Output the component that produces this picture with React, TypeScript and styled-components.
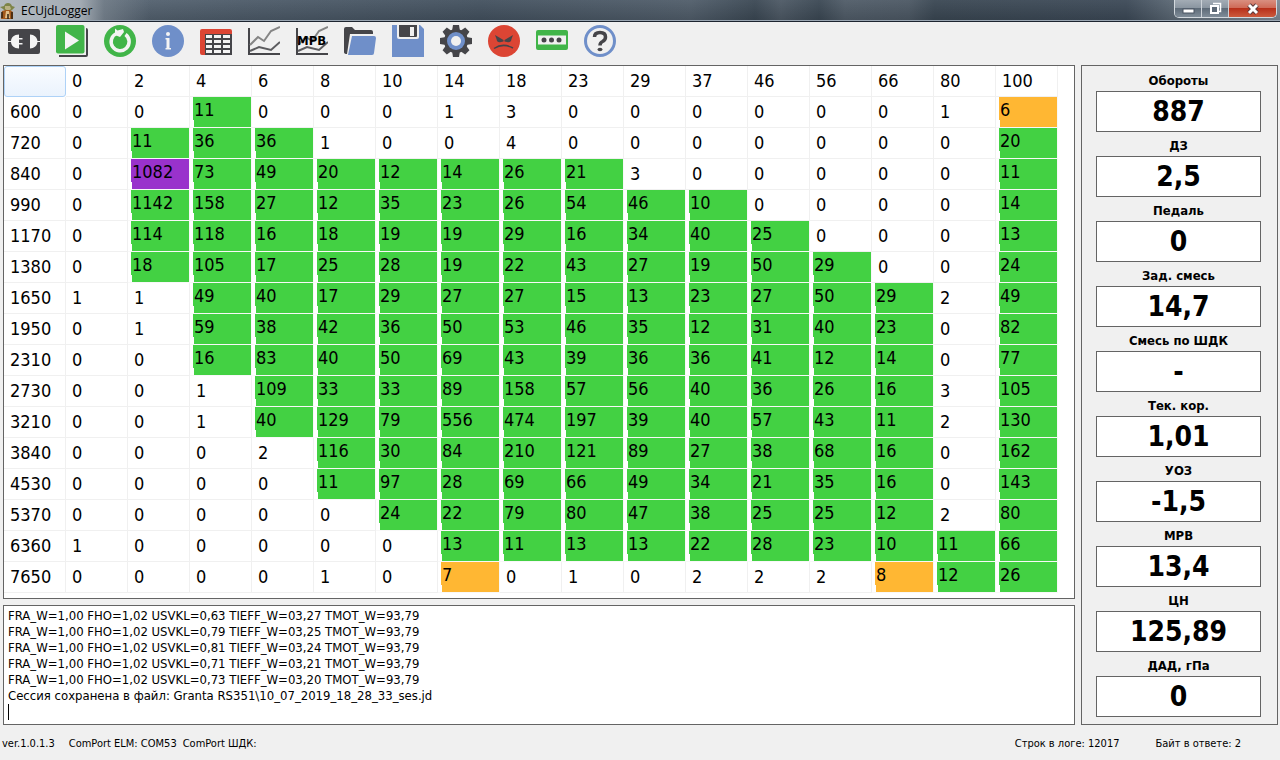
import React from "react";
import styled, { createGlobalStyle, css } from "styled-components";

const Global = createGlobalStyle`
  * { box-sizing: border-box; }
  html, body, #root { height: 100%; }
  body {
    margin: 0;
    background: #f0f0f0;
    color: #000;
    font-family: "DejaVu Sans Condensed", "DejaVu Sans", sans-serif;
    font-size: 11px;
  }
`;

const Window = styled.div`
  display: flex;
  flex-direction: column;
  min-height: 100%;
`;

const TitleBar = styled.header`
  display: flex;
  align-items: flex-start;
  justify-content: space-between;
  height: 22px;
  padding-right: 3px;
  border-bottom: 1px solid #1d2530;
  box-shadow: inset 0 -1px 0 #9aa6b2;
  background:
    linear-gradient(90deg, #b4bbc2 0, #a3abb3 80px, rgba(128, 138, 148, 0.6) 104px, rgba(80, 92, 104, 0) 150px),
    linear-gradient(rgba(255, 255, 255, 0.05), rgba(0, 0, 0, 0.12)),
    linear-gradient(90deg, #5c6a78 0, #4d5b69 240px, #43515f 480px, #505d6a 54%, #3b4854 59%, #4d5965 61%, #3b4854 64%, #505c68 66%, #4c5864 71%, #3a4753 73%, #3c4957 88%, #66737f 93%, #7d8a96 100%);
`;

const Caption = styled.div`
  display: flex;
  align-items: center;
  gap: 6px;
  height: 21px;
  font-family: "Open Sans", sans-serif;
  font-size: 12px;
`;

const WindowButtons = styled.div`
  display: flex;
  height: 18px;
  border: 1px solid #d3d9de;
  border-top: 0;
  border-radius: 0 0 5px 5px;
  overflow: hidden;
`;

const WindowButton = styled.button<{ $close?: boolean }>`
  display: flex;
  align-items: center;
  justify-content: center;
  width: ${(p) => (p.$close ? 47 : 27)}px;
  padding: 0;
  border: 0;
  border-right: ${(p) => (p.$close ? "0" : "1px solid #cdd3d9")};
  background: ${(p) =>
    p.$close
      ? "linear-gradient(#d98f80 0, #cf6b58 45%, #b8301a 50%, #cc5a3c 100%)"
      : "linear-gradient(#a3acb5 0, #8b96a1 45%, #5e6b78 50%, #7f8c98 100%)"};
`;

const Toolbar = styled.nav`
  display: flex;
  gap: 16px;
  height: 43px;
  padding: 3px 8px;
`;

const ToolButton = styled.button`
  width: 32px;
  height: 32px;
  padding: 0;
  border: 0;
  background: none;
  svg { display: block; }
`;

const Workspace = styled.main`
  display: flex;
  gap: 6px;
  padding: 0 2px 0 3px;
`;

const LeftColumn = styled.div`
  display: flex;
  flex: 1;
  flex-direction: column;
  gap: 6px;
  min-width: 0;
`;

const Frame = styled.section`
  border: 1px solid #646464;
  background: #fff;
`;

const GridFrame = styled(Frame)`
  height: 534px;
`;

const Grid = styled.table`
  width: 1054px;
  border-collapse: separate;
  border-spacing: 0;
  table-layout: fixed;
  font-size: 18px;
`;

const cell = css`
  height: 31px;
  padding: 0 0 0 6px;
  border: 0 solid #f0f0f0;
  border-width: 0 1px 1px 0;
  font-weight: normal;
  line-height: 30px;
  text-align: left;
`;

const HeadCell = styled.th`${cell}`;

const CornerCell = styled.td`
  ${cell}
  padding: 0;
  border: 1px solid #aed2f7;
  border-radius: 3px;
  background: linear-gradient(#f9fcff, #ebf3fd);
`;

const fills = { green: "#43d143", orange: "#ffb733", purple: "#9932cc" };
type Fill = keyof typeof fills;

const DataCell = styled.td<{ $fill?: Fill }>`
  ${cell}
  ${(p) =>
    p.$fill &&
    css`
      padding-left: 3px;
      border-color: #f8f8f8;
    `}
`;

const Mark = styled.div<{ $fill: Fill }>`
  height: 30px;
  padding-left: 1px;
  line-height: 26px;
  background:
    linear-gradient(#fff, #fff) 0 100% / 1px 7px no-repeat,
    ${(p) => fills[p.$fill]};
`;

const LogFrame = styled(Frame)`
  height: 120px;
  padding: 2px 4px;
`;

const LogText = styled.textarea`
  display: block;
  width: 100%;
  height: 96px;
  padding: 0;
  border: 0;
  outline: 0;
  resize: none;
  overflow: hidden;
  background: none;
  color: #000;
  font: inherit;
  font-size: 13px;
  line-height: 16px;
`;

const Caret = styled.div`
  width: 1px;
  height: 16px;
  background: #000;
`;

const Gauges = styled.aside`
  display: flex;
  flex-direction: column;
  width: 197px;
  padding: 3px 16px 0 14px;
  border: 1px solid #646464;
`;

const Gauge = styled.div`
  display: flex;
  flex-direction: column;
  height: 65px;
`;

const GaugeLabel = styled.label`
  height: 22px;
  font-size: 13px;
  font-weight: bold;
  line-height: 24px;
  text-align: center;
`;

const GaugeValue = styled.input`
  width: 100%;
  height: 41px;
  padding: 0;
  border: 1px solid #646464;
  border-radius: 0;
  background: #fff;
  color: #000;
  font: inherit;
  font-size: 28px;
  font-weight: bold;
  text-align: center;
`;

const StatusBar = styled.footer`
  display: flex;
  justify-content: space-between;
  padding: 11px 39px 0 2px;
  line-height: 16px;
`;

const StatusGroup = styled.div<{ $gap: number }>`
  display: flex;
  gap: ${(p) => p.$gap}px;
`;

const Version = styled.span`
  margin-right: 8px;
`;

const DARK = "#454549";
const BLUE = "#6f8fc9";
const GREEN = "#41b549";
const RED = "#dc4534";

const ChartLines = () => (
  <>
    <path d="M1 3v26h31" fill="none" stroke={DARK} strokeWidth="2" />
    <path d="M2 20l8-8 6 4 7-10 9-4" fill="none" stroke="#858585" strokeWidth="2" />
    <path d="M2 26l9-4 12 3 9-8" fill="none" stroke="#5c5c5f" strokeWidth="2" />
  </>
);

const tools: { name: string; art: React.ReactNode }[] = [
  {
    name: "Подключение",
    art: (
      <>
        <rect x="0" y="4" width="32" height="25" rx="2" fill={DARK} />
        <path d="M11 9.500v14c-5 0-8-3-8-7s3-7 8-7zM11 13h3.500v1.500H11zM11 18h3.500v1.500H11zM22 9.500c4 0 7.500 3 7.500 7s-3.500 7-7.500 7z" fill="#f4f4f4" />
        <path d="M0 16.500h4M29 16.500h3" stroke="#f4f4f4" />
      </>
    ),
  },
  {
    name: "Старт",
    art: (
      <>
        <path d="M30 3v27H3v2h27q2 0 2-2V5q0-2-2-2z" fill={DARK} />
        <rect width="28.500" height="28.500" rx="2" fill={GREEN} />
        <path d="M9 6.500v18l14-9z" fill="#f4f4f4" />
      </>
    ),
  },
  {
    name: "Обновить",
    art: (
      <>
        <circle cx="16" cy="16" r="16" fill={GREEN} />
        <path d="M21.500 9.500A9 9 0 1 1 12.500 8.500" fill="none" stroke="#f4f4f4" strokeWidth="3.500" />
        <path d="M11 3.500l2.500 2L19 4l1 3-4 5-5-2z" fill="#f4f4f4" />
      </>
    ),
  },
  {
    name: "Информация",
    art: (
      <>
        <circle cx="16" cy="16" r="16" fill={BLUE} />
        <circle cx="16" cy="9" r="2" fill="#f4f4f4" />
        <path d="M13.500 13h4v10h1.500v1.500h-5.500V23h1v-8.500h-1z" fill="#f4f4f4" />
      </>
    ),
  },
  {
    name: "Таблица",
    art: (
      <>
        <path d="M0 6q0-2 2-2h28q2 0 2 2v3H5v21H2q-2 0-2-2z" fill={RED} />
        <path d="M5 9h27v21H5z" fill={DARK} />
        <path d="M6 10h6v3H6zM14 10h7v3h-7zM23 10h7v3h-7zM6 15h6v3H6zM14 15h7v3h-7zM23 15h7v3h-7zM6 20h6v3H6zM14 20h7v3h-7zM23 20h7v3h-7zM6 25h6v3H6zM14 25h7v3h-7zM23 25h7v3h-7z" fill="#f4f4f4" />
      </>
    ),
  },
  { name: "График", art: <ChartLines /> },
  {
    name: "График МРВ",
    art: (
      <>
        <ChartLines />
        <text x="1" y="20" fontSize="13" fontWeight="bold" fontFamily="DejaVu Sans Condensed, sans-serif">MPB</text>
      </>
    ),
  },
  {
    name: "Открыть",
    art: (
      <>
        <path d="M0 27V4q0-2 2-2h6l3 3h16q2 0 2 2v2H6L3 29q-3 0-3-2z" fill={DARK} />
        <path d="M8 11h22q2 0 2 2l-2 15q0 2-2 2H4z" fill={BLUE} />
      </>
    ),
  },
  {
    name: "Сохранить",
    art: (
      <>
        <path d="M0 0h28l4 4v28H0z" fill={BLUE} />
        <path d="M5 0h22v12q0 2-2 2H7q-2 0-2-2z" fill="#f0f0f0" />
        <path d="M7 0h18v11q0 1-1 1H8q-1 0-1-1z" fill={DARK} />
        <path d="M18 2h4v9h-4z" fill="#f0f0f0" />
      </>
    ),
  },
  {
    name: "Настройки",
    art: (
      <>
        <g fill={DARK}>
          <circle cx="16" cy="16" r="12" />
          {[0, 45, 90, 135].map((a) => (
            <path key={a} d="M13 0h6l1 6v20l-1 6h-6l-1-6V6z" transform={`rotate(${a} 16 16)`} />
          ))}
        </g>
        <circle cx="16" cy="16" r="9" fill={BLUE} />
        <circle cx="16" cy="16" r="5" fill="#f0f0f0" />
      </>
    ),
  },
  {
    name: "Ошибки",
    art: (
      <>
        <circle cx="16" cy="16" r="16" fill={RED} />
        <path d="M7 10l8.500 5v1.500L13 17q-4 1-4.500-3zM25 10l-8.500 5v1.500l2.500.5q4 1 4.500-3z" fill={DARK} />
        <path d="M6 23.500q9-6 19-.5" fill="none" stroke={DARK} strokeWidth="1.500" />
      </>
    ),
  },
  {
    name: "Терминал",
    art: (
      <>
        <rect y="5" width="32" height="20" rx="2" fill={GREEN} />
        <path d="M2 10.500h28v9H2z" fill="#f0f0f0" />
        <g fill={DARK}>
          <circle cx="8" cy="15" r="2.500" />
          <circle cx="15.500" cy="15" r="2.500" />
          <circle cx="23" cy="15" r="2.500" />
        </g>
      </>
    ),
  },
  {
    name: "Справка",
    art: (
      <>
        <circle cx="16" cy="16" r="14.500" fill="#f0f0f0" stroke={BLUE} strokeWidth="3" />
        <path d="M10.500 12q0-4.500 5.500-4.500t5.500 4.500q0 3-3 4.500-2.500 1-2.500 4" fill="none" stroke={DARK} strokeWidth="3.500" />
        <ellipse cx="16" cy="24.500" rx="2.500" ry="1.800" fill={DARK} />
      </>
    ),
  },
];

const columns = [0, 2, 4, 6, 8, 10, 14, 18, 23, 29, 37, 46, 56, 66, 80, 100];

const rows: [number, string][] = [
  [600, "0 0 11g 0 0 0 1 3 0 0 0 0 0 0 1 6o"],
  [720, "0 11g 36g 36g 1 0 0 4 0 0 0 0 0 0 0 20g"],
  [840, "0 1082p 73g 49g 20g 12g 14g 26g 21g 3 0 0 0 0 0 11g"],
  [990, "0 1142g 158g 27g 12g 35g 23g 26g 54g 46g 10g 0 0 0 0 14g"],
  [1170, "0 114g 118g 16g 18g 19g 19g 29g 16g 34g 40g 25g 0 0 0 13g"],
  [1380, "0 18g 105g 17g 25g 28g 19g 22g 43g 27g 19g 50g 29g 0 0 24g"],
  [1650, "1 1 49g 40g 17g 29g 27g 27g 15g 13g 23g 27g 50g 29g 2 49g"],
  [1950, "0 1 59g 38g 42g 36g 50g 53g 46g 35g 12g 31g 40g 23g 0 82g"],
  [2310, "0 0 16g 83g 40g 50g 69g 43g 39g 36g 36g 41g 12g 14g 0 77g"],
  [2730, "0 0 1 109g 33g 33g 89g 158g 57g 56g 40g 36g 26g 16g 3 105g"],
  [3210, "0 0 1 40g 129g 79g 556g 474g 197g 39g 40g 57g 43g 11g 2 130g"],
  [3840, "0 0 0 2 116g 30g 84g 210g 121g 89g 27g 38g 68g 16g 0 162g"],
  [4530, "0 0 0 0 11g 97g 28g 69g 66g 49g 34g 21g 35g 16g 0 143g"],
  [5370, "0 0 0 0 0 24g 22g 79g 80g 47g 38g 25g 25g 12g 2 80g"],
  [6360, "1 0 0 0 0 0 13g 11g 13g 13g 22g 28g 23g 10g 11g 66g"],
  [7650, "0 0 0 0 1 0 7o 0 1 0 2 2 2 8o 12g 26g"],
];

const fillCodes: Record<string, Fill> = { g: "green", o: "orange", p: "purple" };

const gauges = [
  ["Обороты", "887"],
  ["ДЗ", "2,5"],
  ["Педаль", "0"],
  ["Зад. смесь", "14,7"],
  ["Смесь по ШДК", "-"],
  ["Тек. кор.", "1,01"],
  ["УОЗ", "-1,5"],
  ["МРВ", "13,4"],
  ["ЦН", "125,89"],
  ["ДАД, гПа", "0"],
];

const logLines = [
  "FRA_W=1,00 FHO=1,02 USVKL=0,63 TIEFF_W=03,27 TMOT_W=93,79",
  "FRA_W=1,00 FHO=1,02 USVKL=0,79 TIEFF_W=03,25 TMOT_W=93,79",
  "FRA_W=1,00 FHO=1,02 USVKL=0,81 TIEFF_W=03,24 TMOT_W=93,79",
  "FRA_W=1,00 FHO=1,02 USVKL=0,71 TIEFF_W=03,21 TMOT_W=93,79",
  "FRA_W=1,00 FHO=1,02 USVKL=0,73 TIEFF_W=03,20 TMOT_W=93,79",
  "Сессия сохранена в файл: Granta RS351\\10_07_2019_18_28_33_ses.jd",
];

const AppIcon = () => (
  <svg width="15" height="18" viewBox="0 0 15 18">
    <path d="M0 5l4-1q1-3 4-3t4 3l3 1-3 3-2 1H5L3 7z" fill="#7d8447" />
    <path d="M5 4h5l1 3-3 2-3-2z" fill="#b9b183" />
    <path d="M2 9l4-1h4l3 2v7H1z" fill="#a3591c" />
    <path d="M6 9h3l1 7H5z" fill="#e2c08a" />
    <path d="M2 10v6M12 10v7M8 12v5" stroke="#33200f" strokeWidth="1.500" />
  </svg>
);

export default function App() {
  return (
    <Window>
      <Global />
      <TitleBar>
        <Caption>
          <AppIcon />
          ECUjdLogger
        </Caption>
        <WindowButtons>
          <WindowButton aria-label="Свернуть">
            <svg width="13" height="12"><rect x="1" y="6" width="11" height="4" fill="#fff" stroke="#4a5563" /></svg>
          </WindowButton>
          <WindowButton aria-label="Развернуть">
            <svg width="13" height="13">
              <path d="M4 1.500h7.500v8H9" fill="none" stroke="#fff" strokeWidth="1.500" />
              <rect x="2" y="4" width="7" height="7" fill="#5d6976" stroke="#fff" strokeWidth="2" />
            </svg>
          </WindowButton>
          <WindowButton $close aria-label="Закрыть">
            <svg width="14" height="12">
              <path d="M3 2l8 8M11 2l-8 8" stroke="#5c3a3c" strokeWidth="5" />
              <path d="M3 2l8 8M11 2l-8 8" stroke="#fff" strokeWidth="3" />
            </svg>
          </WindowButton>
        </WindowButtons>
      </TitleBar>
      <Toolbar>
        {tools.map((t) => (
          <ToolButton key={t.name} aria-label={t.name}>
            <svg width="32" height="32" viewBox="0 0 32 32">{t.art}</svg>
          </ToolButton>
        ))}
      </Toolbar>
      <Workspace>
        <LeftColumn>
          <GridFrame>
            <Grid>
              <thead>
                <tr>
                  <CornerCell />
                  {columns.map((c) => <HeadCell key={c} scope="col">{c}</HeadCell>)}
                </tr>
              </thead>
              <tbody>
                {rows.map(([rpm, values]) => (
                  <tr key={rpm}>
                    <HeadCell scope="row">{rpm}</HeadCell>
                    {values.split(" ").map((v, i) => {
                      const fill = fillCodes[v.slice(-1)];
                      return (
                        <DataCell key={columns[i]} $fill={fill}>
                          {fill ? <Mark $fill={fill}>{v.slice(0, -1)}</Mark> : v}
                        </DataCell>
                      );
                    })}
                  </tr>
                ))}
              </tbody>
            </Grid>
          </GridFrame>
          <LogFrame>
            <LogText aria-label="Журнал" readOnly rows={6} defaultValue={logLines.join("\n")} />
            <Caret />
          </LogFrame>
        </LeftColumn>
        <Gauges>
          {gauges.map(([label, value], i) => (
            <Gauge key={label}>
              <GaugeLabel htmlFor={`gauge-${i}`}>{label}</GaugeLabel>
              <GaugeValue id={`gauge-${i}`} readOnly value={value} />
            </Gauge>
          ))}
        </Gauges>
      </Workspace>
      <StatusBar>
        <StatusGroup $gap={6}>
          <Version>ver.1.0.1.3</Version>
          <span>ComPort ELM: COM53</span>
          <span>ComPort ШДК:</span>
        </StatusGroup>
        <StatusGroup $gap={36}>
          <span>Строк в логе: 12017</span>
          <span>Байт в ответе: 2</span>
        </StatusGroup>
      </StatusBar>
    </Window>
  );
}
